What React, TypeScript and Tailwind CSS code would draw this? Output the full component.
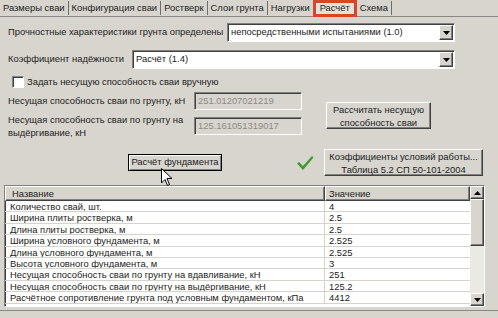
import type { ReactNode } from "react";

// ─── Win-classic helpers ──────────────────────────────────────────────────────
const raised =
  "border border-t-white border-l-white border-r-[#404040] border-b-[#404040] shadow-[inset_-1px_-1px_0_#808080] bg-[#d8d5ce]";
const sunken =
  "border border-t-[#808080] border-l-[#808080] border-r-white border-b-white shadow-[inset_1px_1px_0_#404040]";

const tabs = ["Размеры сваи", "Конфигурация сваи", "Ростверк", "Слои грунта", "Нагрузки"];

const rows: [string, string][] = [
  ["Количество свай, шт.", "4"],
  ["Ширина плиты ростверка, м", "2.5"],
  ["Длина плиты ростверка, м", "2.5"],
  ["Ширина условного фундамента, м", "2.525"],
  ["Длина условного фундамента, м", "2.525"],
  ["Высота условного фундамента, м", "3"],
  ["Несущая способность сваи по грунту на вдавливание, кН", "251"],
  ["Несущая способность сваи по грунту на выдёргивание, кН", "125.2"],
  ["Расчётное сопротивление грунта под условным фундаментом, кПа", "4412"],
];

function Arrow({ up }: { up?: boolean }) {
  return (
    <svg width="7" height="4" viewBox="0 0 7 4">
      <path d={up ? "M3.5 0 L7 4 L0 4 Z" : "M0 0 L7 0 L3.5 4 Z"} fill="#000" />
    </svg>
  );
}

function Combo({ value, className }: { value: string; className?: string }) {
  return (
    <div className={`flex h-[19px] items-center bg-white ${sunken} ${className ?? ""}`}>
      <span className="flex-1 truncate pl-[3px]">{value}</span>
      <div className={`mr-[1px] flex h-[15px] w-[14px] items-center justify-center ${raised}`}>
        <Arrow />
      </div>
    </div>
  );
}

function Field({ value }: { value: string }) {
  return (
    <div
      className={`flex h-[18px] w-[108px] items-center bg-[#d8d5ce] pl-[3px] text-[#8c8a86] ${sunken}`}
    >
      {value}
    </div>
  );
}

function Button({ children, className }: { children: ReactNode; className?: string }) {
  return (
    <div className={`flex flex-col items-center justify-center leading-[13px] ${raised} ${className ?? ""}`}>
      {children}
    </div>
  );
}

// ─── Main ─────────────────────────────────────────────────────────────────────
export default function App() {
  return (
    <div
      className="relative h-[318px] w-[498px] overflow-hidden whitespace-nowrap bg-[#d8d5ce] text-[9.4px] text-[#1c1c1c]"
      style={{ fontFamily: '"Liberation Sans", Arial, sans-serif' }}
    >
      {/* tab strip */}
      <div className="flex h-[17px] items-center gap-[3px] border-b border-[#8a8884] pl-[3px] leading-none">
        {tabs.map((t) => (
          <div key={t} className="flex items-center gap-[3px]">
            <span>{t}</span>
            {t !== "Нагрузки" && <span className="h-[14px] w-[1px] bg-[#6f6d69]" />}
          </div>
        ))}
        <span className="flex h-[17px] items-center border-[3px] border-[#d8452c] bg-[#e4e1db] px-[4px]">
          Расчёт
        </span>
        <span>Схема</span>
        <span className="h-[14px] w-[1px] bg-[#6f6d69]" />
      </div>

      <div className="flex flex-col px-[8px] pt-[6px]">
        {/* combos */}
        <div className="flex w-[447px] items-center">
          <span className="w-[219px]">Прочностные характеристики грунта определены</span>
          <Combo value="непосредственными испытаниями (1.0)" className="flex-1" />
        </div>
        <div className="mt-[8px] flex w-[447px] items-center">
          <span className="w-[124px]">Коэффициент надёжности</span>
          <Combo value="Расчёт (1.4)" className="flex-1" />
        </div>

        {/* checkbox */}
        <div className="mt-[7px] flex h-[12px] items-center gap-[3px] pl-[4px]">
          <span className={`h-[12px] w-[12px] bg-white ${sunken}`} />
          <span>Задать несущую способность сваи вручную</span>
        </div>

        {/* bearing capacity */}
        <div className="mt-[4px] flex items-center">
          <div className="flex w-[294px] flex-col">
            <div className="flex items-center">
              <span className="w-[186px]">Несущая способность сваи по грунту, кН</span>
              <Field value="251.01207021219" />
            </div>
            <div className="mt-[3px] flex h-[26px] items-center">
              <span className="flex w-[186px] flex-col leading-[13px]">
                <span>Несущая способность сваи по грунту на</span>
                <span>выдёргивание, кН</span>
              </span>
              <Field value="125.161051319017" />
            </div>
          </div>
          <Button className="ml-[24px] h-[27px] w-[105px]">
            <span>Рассчитать несущую</span>
            <span>способность сваи</span>
          </Button>
        </div>

        {/* action buttons */}
        <div className="mt-[10px] flex h-[27px] items-center">
          <div className="ml-[120px] flex h-[17px] w-[94px] items-center justify-center border border-black bg-[#d8d5ce] shadow-[inset_1px_1px_0_#fff,inset_-1px_-1px_0_#808080]">
            Расчёт фундамента
          </div>
          <svg className="ml-[74px]" width="18" height="16" viewBox="0 0 18 16">
            <path d="M1 8.5 L3 7 L7 11 L16 1 L17.5 2.5 L7 15 Z" fill="#3f9b2f" />
          </svg>
          <Button className="ml-[10px] h-[27px] w-[159px]">
            <span>Коэффициенты условий работы...</span>
            <span>Таблица 5.2 СП 50-101-2004</span>
          </Button>
        </div>
      </div>

      {/* results table */}
      <div className={`mx-[4px] mt-[9px] flex h-[122px] w-[481px] bg-white ${sunken}`}>
        <div className="flex flex-1 flex-col">
          <div className="flex h-[15px] bg-[#d8d5ce]">
            <div className={`w-[320px] pl-[6px] leading-[13px] ${raised}`}>Название</div>
            <div className={`flex-1 pl-[3px] leading-[13px] ${raised}`}>Значение</div>
          </div>
          {rows.map(([name, value]) => (
            <div key={name} className="flex h-[11.4px] border-b border-[#d6d3cc] leading-[11px]">
              <div className="w-[320px] truncate border-r border-[#d6d3cc] pl-[5px]">{name}</div>
              <div className="flex-1 pl-[4px]">{value}</div>
            </div>
          ))}
        </div>
        {/* scrollbar */}
        <div className="flex w-[14px] flex-col bg-[#ebe9e4]">
          <div className={`flex h-[13px] items-center justify-center ${raised}`}>
            <Arrow up />
          </div>
          <div className={`h-[47px] ${raised}`} />
          <div className="flex-1" />
          <div className={`flex h-[13px] items-center justify-center ${raised}`}>
            <Arrow />
          </div>
        </div>
      </div>

      <div className="mt-[3px] h-[1px] w-full bg-[#8a8884]" />

      {/* mouse pointer over "Расчёт фундамента" */}
      <svg className="absolute left-[161px] top-[168px]" width="12" height="19" viewBox="0 0 12 19">
        <path
          d="M0.5 0.5 L0.5 15 L4 11.5 L6.5 17.5 L8.5 16.5 L6 10.5 L11 10.5 Z"
          fill="#fff"
          stroke="#000"
          strokeWidth="1"
        />
      </svg>
    </div>
  );
}
